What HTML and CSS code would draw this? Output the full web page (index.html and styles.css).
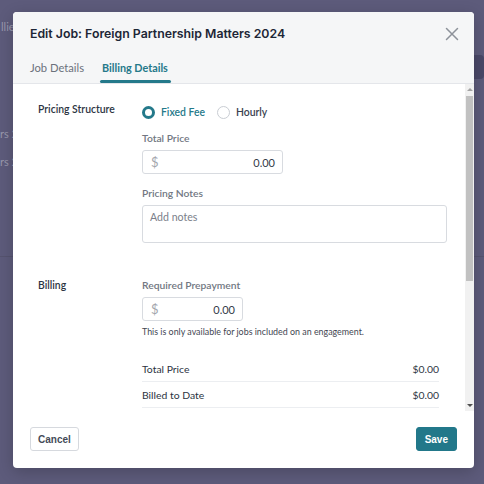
FILE: index.html
```html
<!DOCTYPE html>
<html lang="en">

<head>
    <meta charset="UTF-8">
    <meta name="viewport" content="width=device-width, initial-scale=1.0">
    <title>Edit Job</title>
    <link rel="stylesheet" href="styles.css">
</head>

<body>
    <!-- page behind the dialog -->
    <div class="page">
        <div class="page-top">
            <span class="crumb">llients</span>
            <span class="page-btn"></span>
        </div>
        <div class="page-row one">rs 2024</div>
        <div class="page-row two">rs 2024</div>
        <div class="page-rule"></div>
    </div>

    <div class="modal">
        <div class="modal-header">
            <div class="modal-title-row">
                <h2 class="modal-title">Edit Job: Foreign Partnership Matters 2024</h2>
                <svg class="close" width="14" height="14" viewBox="0 0 14 14">
                    <path d="M1.5 1.5 L12.5 12.5 M12.5 1.5 L1.5 12.5" stroke="#8d929a" stroke-width="1.5" fill="none" stroke-linecap="round"/>
                </svg>
            </div>
            <div class="tabs">
                <span class="tab">Job Details</span>
                <span class="tab active">Billing Details</span>
            </div>
        </div>

        <div class="modal-main">
            <div class="modal-body">
                <div class="section">
                    <div class="section-label">Pricing Structure</div>
                    <div class="section-fields">
                        <div class="radio-row">
                            <label class="radio checked"><span class="dot"></span>Fixed Fee</label>
                            <label class="radio"><span class="dot"></span>Hourly</label>
                        </div>

                        <div class="field-label">Total Price</div>
                        <div class="money-input wide">
                            <span class="currency">$</span>
                            <span class="amount">0.00</span>
                        </div>

                        <div class="field-label">Pricing Notes</div>
                        <div class="notes">Add notes</div>
                    </div>
                </div>

                <div class="section billing">
                    <div class="section-label">Billing</div>
                    <div class="section-fields">
                        <div class="field-label first">Required Prepayment</div>
                        <div class="money-input">
                            <span class="currency">$</span>
                            <span class="amount">0.00</span>
                        </div>
                        <p class="help">This is only available for jobs included on an engagement.</p>

                        <div class="summary">
                            <div class="summary-row"><span>Total Price</span><span>$0.00</span></div>
                            <div class="summary-row"><span>Billed to Date</span><span>$0.00</span></div>
                        </div>
                    </div>
                </div>
            </div>

            <div class="scrollbar">
                <span class="arrow up"></span>
                <span class="thumb"></span>
                <span class="arrow down"></span>
            </div>
        </div>

        <div class="modal-footer">
            <button class="btn">Cancel</button>
            <button class="btn primary">Save</button>
        </div>
    </div>
</body>

</html>
```

FILE: styles.css
```css
body {
    margin: 0;
    height: 484px;
    overflow: hidden;
    background-color: #5d5b7b;
    font-family: "Lato", "Liberation Sans", sans-serif;
}

/* page behind the dialog */
.page {
    color: #9998ad;
    font-size: 11px;
}

.page-top {
    display: flex;
    justify-content: space-between;
    padding-top: 20px;
    height: 35px;
}

.crumb {
    margin-left: 1px;
}

.page-btn {
    width: 14px;
    height: 24px;
    margin-top: 35px;
    border-radius: 4px;
    background-color: #4a4868;
}

.page-row {
    line-height: 14px;
}

.page-row.one {
    margin-top: 72px;
}

.page-row.two {
    margin-top: 14px;
}

.page-rule {
    margin-top: 87px;
    height: 1px;
    background-color: #55536f;
}

/* dialog */
.modal {
    position: absolute;
    top: 12px;
    left: 13px;
    width: 461px;
    height: 456px;
    background-color: #ffffff;
    border-radius: 4px;
    display: flex;
    flex-direction: column;
    overflow: hidden;
    box-shadow: 0 4px 16px rgba(0, 0, 0, 0.2);
}

.modal-header {
    background-color: #f5f6f7;
    border-bottom: 1px solid #e4e6ea;
    padding: 13px 17px 0 17px;
}

.modal-title-row {
    display: flex;
    justify-content: space-between;
    align-items: center;
}

.modal-title {
    margin: 0;
    font-family: "Inter", sans-serif;
    font-size: 12.3px;
    font-weight: 600;
    line-height: 18px;
    color: #1d2636;
}

.close {
    margin-right: -2px;
}

.tabs {
    display: flex;
    gap: 14px;
    margin-top: 17px;
    margin-left: -2px;
}

.tab {
    position: relative;
    padding: 0 2px 7px 2px;
    font-size: 11.2px;
    line-height: 16px;
    color: #6b717c;
}

.tab.active {
    color: #24798a;
    font-weight: 700;
    font-size: 10.8px;
}

.tab.active::after {
    content: "";
    position: absolute;
    left: 0;
    right: -1px;
    bottom: 0;
    height: 3px;
    border-radius: 2px;
    background-color: #24798a;
}

.modal-main {
    flex: 1;
    min-height: 0;
    display: flex;
}

.modal-body {
    flex: 1;
    overflow: hidden;
    padding: 17px 18px 0 25px;
}

/* drawn scrollbar */
.scrollbar {
    width: 9px;
    background-color: #f1f1f1;
    display: flex;
    flex-direction: column;
    align-items: center;
    padding: 2px 0;
}

.arrow {
    width: 0;
    height: 0;
    border-left: 3px solid transparent;
    border-right: 3px solid transparent;
    margin: 2px 0;
}

.arrow.up {
    border-bottom: 3px solid #a3a3a3;
}

.arrow.down {
    border-top: 3px solid #505050;
    margin-top: auto;
}

.thumb {
    width: 7px;
    height: 185px;
    margin-top: 3px;
    background-color: #c1c1c1;
}

.section {
    display: grid;
    grid-template-columns: 104px 1fr;
}

.section.billing {
    margin-top: 35px;
}

.section-label {
    font-size: 10.4px;
    line-height: 16px;
    font-weight: 600;
    color: #2c3442;
}

.billing .section-label {
    line-height: 14px;
}

.radio-row {
    display: flex;
    gap: 12px;
    margin-top: 3px;
    height: 16px;
    align-items: center;
}

.radio {
    display: flex;
    align-items: center;
    gap: 6px;
    font-size: 10.4px;
    color: #3a4250;
    font-weight: 600;
}

.radio .dot {
    width: 11px;
    height: 11px;
    border: 1px solid #c9cdd3;
    border-radius: 50%;
    background-color: #fff;
}

.radio.checked {
    color: #24798a;
}

.radio.checked .dot {
    width: 7px;
    height: 7px;
    border: 3px solid #24798a;
}

.field-label {
    margin-top: 11px;
    font-size: 10.3px;
    line-height: 14px;
    color: #717782;
    font-weight: 600;
}

.field-label.first {
    margin-top: 0;
}

.money-input {
    margin-top: 5px;
    width: 101px;
    height: 24px;
    box-sizing: border-box;
    border: 1px solid #d8dbe0;
    border-radius: 3px;
    display: flex;
    justify-content: space-between;
    align-items: center;
    padding: 0 7px 0 8px;
}

.money-input.wide {
    width: 141px;
}

.money-input + .field-label {
    margin-top: 12px;
}

.currency {
    font-size: 13px;
    color: #a3a7ae;
}

.amount {
    font-size: 11px;
    color: #353c48;
}

.notes {
    margin-top: 5px;
    height: 38px;
    box-sizing: border-box;
    border: 1px solid #d8dbe0;
    border-radius: 3px;
    padding: 5px 7px;
    font-size: 10.6px;
    color: #7b808a;
}

.help {
    margin: 5px 0 0 0;
    font-size: 8.9px;
    line-height: 12px;
    color: #3f4652;
}

.summary {
    margin-top: 18px;
    margin-right: 8px;
}

.summary-row {
    display: flex;
    justify-content: space-between;
    align-items: center;
    height: 25px;
    border-bottom: 1px solid #eceef1;
    font-size: 10.4px;
    color: #2c3442;
}

.modal-footer {
    display: flex;
    justify-content: space-between;
    padding: 16px 17px 17px 17px;
}

.btn {
    height: 24px;
    padding: 0 7px;
    border: 1px solid #d6d9de;
    border-radius: 3px;
    background-color: #fff;
    font-family: "Liberation Sans", Arial, sans-serif;
    font-size: 10px;
    font-weight: 700;
    color: #444b57;
}

.btn.primary {
    background-color: #22788a;
    border-color: #22788a;
    color: #ffffff;
    padding: 0 8px;
}
```
